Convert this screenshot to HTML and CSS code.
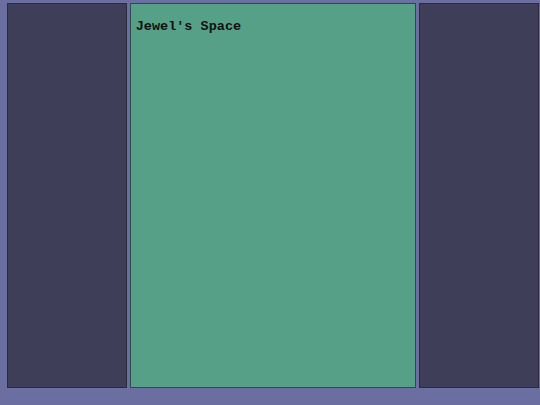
FILE: index.html
```html
<!DOCTYPE html>
<html>
<head>
<meta charset="utf-8">
<link rel="stylesheet" href="styles.css">
</head>
<body>
<div class="layout">
  <aside class="side"></aside>
  <main class="center">
    <h1 class="title">Jewel's Space</h1>
  </main>
  <aside class="side"></aside>
</div>
</body>
</html>
```
FILE: styles.css
```css
html, body {
  margin: 0;
  padding: 0;
  background: #6a6ea0;
  height: 100%;
}
.layout {
  display: flex;
  gap: 3px;
  padding: 3px 1px 0 7px;
  height: 385px;
}
.side {
  width: 120px;
  box-sizing: border-box;
  background: #3e3e59;
  border: 1px solid #2b2b40;
}
.center {
  width: 287px;
  box-sizing: border-box;
  background: #57a088;
  border: 1px solid #2e4a4a;
  padding: 15px 5px;
}
.title {
  margin: 0;
  font-family: "Liberation Mono", "Courier New", monospace;
  font-weight: bold;
  font-size: 13.5px;
  color: #111;
}
```
